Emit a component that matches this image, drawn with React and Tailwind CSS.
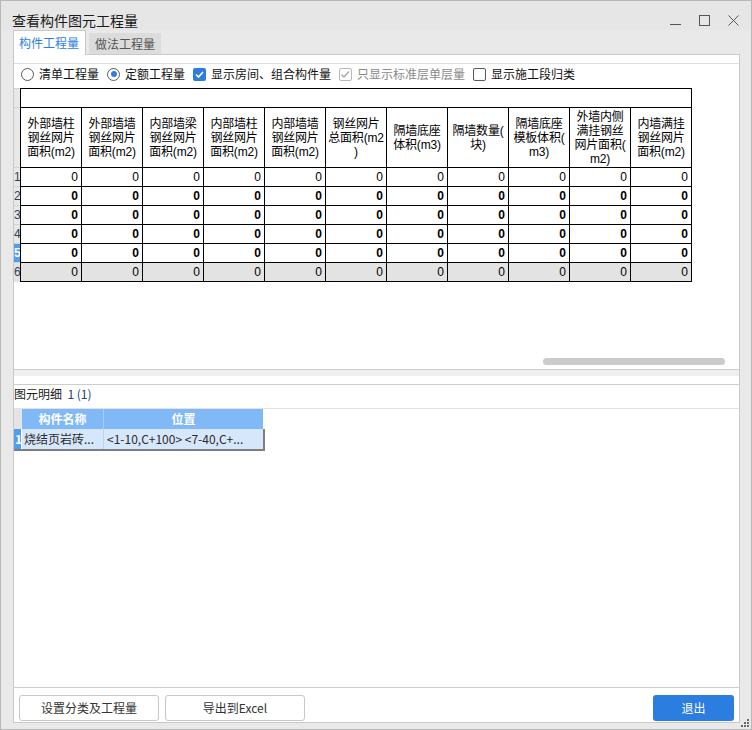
import React from "react";

const HEADERS = [
  ["外部墙柱", "钢丝网片", "面积(m2)"],
  ["外部墙墙", "钢丝网片", "面积(m2)"],
  ["内部墙梁", "钢丝网片", "面积(m2)"],
  ["内部墙柱", "钢丝网片", "面积(m2)"],
  ["内部墙墙", "钢丝网片", "面积(m2)"],
  ["钢丝网片", "总面积(m2", ")"],
  ["隔墙底座", "体积(m3)"],
  ["隔墙数量(", "块)"],
  ["隔墙底座", "模板体积(", "m3)"],
  ["外墙内侧", "满挂钢丝", "网片面积(", "m2)"],
  ["内墙满挂", "钢丝网片", "面积(m2)"],
];

// true = bold row
const ROWS = [false, true, true, true, true, false];

const Radio = ({ checked }) => (
  <span className="w-[13px] h-[13px] shrink-0 rounded-full border border-[#5a5a5a] bg-white flex items-center justify-center">
    {checked && <span className="w-[6px] h-[6px] rounded-full bg-[#2b7de0]" />}
  </span>
);

const Check = ({ checked, disabled }) => {
  if (checked && !disabled) {
    return (
      <span className="w-[13px] h-[13px] shrink-0 rounded-[2px] bg-[#2b7de0] flex items-center justify-center">
        <svg width="11" height="11" viewBox="0 0 11 11">
          <polyline points="2,5.5 4.5,8 9,3" fill="none" stroke="#fff" strokeWidth="1.7" />
        </svg>
      </span>
    );
  }
  return (
    <span
      className={`w-[13px] h-[13px] shrink-0 rounded-[2px] border bg-white flex items-center justify-center ${
        disabled ? "border-[#b8b8b8]" : "border-[#5a5a5a]"
      }`}
    >
      {checked && (
        <svg width="11" height="11" viewBox="0 0 11 11">
          <polyline points="1.5,5.5 4,8 9,2.5" fill="none" stroke="#a8a8a8" strokeWidth="1.4" />
        </svg>
      )}
    </span>
  );
};

const Option = ({ control, label, muted }) => (
  <div className="flex items-center mr-[8px]">
    {control}
    <span className={`ml-[5px] text-[12px] leading-[20px] ${muted ? "text-[#8a8a8a]" : "text-[#111]"}`}>{label}</span>
  </div>
);

const App = () => {
  return (
    <div className="w-[752px] h-[730px] bg-[#e9e9e9] border border-[#b8b8b8] flex flex-col relative overflow-hidden font-['Noto_Sans_CJK_SC','Microsoft_YaHei',sans-serif] text-[#111]">
      {/* title bar */}
      <div className="h-[29px] shrink-0 flex items-start pt-[9px] pl-[11px] pr-[12px] bg-[#e6e6e6]">
        <span className="text-[14px] leading-[20px] text-[#1a1a1a]">查看构件图元工程量</span>
        <div className="ml-auto flex items-center h-[20px] gap-[18px] text-[#555]">
          <svg width="11" height="11" viewBox="0 0 11 11">
            <line x1="0" y1="9.5" x2="11" y2="9.5" stroke="#555" strokeWidth="1" />
          </svg>
          <svg width="11" height="11" viewBox="0 0 11 11">
            <rect x="0.5" y="0.5" width="10" height="10" fill="none" stroke="#555" strokeWidth="1" />
          </svg>
          <svg width="11" height="11" viewBox="0 0 11 11">
            <line x1="0.5" y1="0.5" x2="10.5" y2="10.5" stroke="#555" strokeWidth="1" />
            <line x1="10.5" y1="0.5" x2="0.5" y2="10.5" stroke="#555" strokeWidth="1" />
          </svg>
        </div>
      </div>

      {/* tabs */}
      <div className="h-[24px] shrink-0 flex items-end pl-[12px]">
        <div className="relative z-10 -mb-px h-[25px] w-[73px] bg-white border border-b-0 border-[#c9c9c9] pl-[5px] text-[12px] leading-[23px] text-[#2b7de0]">
          构件工程量
        </div>
        <div className="ml-[3px] h-[21px] w-[72px] bg-[#dcdcdc] pl-[6px] text-[12px] leading-[21px] text-[#555]">
          做法工程量
        </div>
      </div>

      {/* main panel */}
      <div className="ml-[12px] w-[727px] h-[669px] shrink-0 bg-white border border-[#c9c9c9] flex flex-col">
        <div className="h-[8px] shrink-0" />
        {/* options */}
        <div className="h-[21px] shrink-0 border-t border-[#dedede] flex items-center pl-[7px]">
          <Option control={<Radio />} label="清单工程量" />
          <Option control={<Radio checked />} label="定额工程量" />
          <Option control={<Check checked />} label="显示房间、组合构件量" />
          <Option control={<Check checked disabled />} label="只显示标准层单层量" muted />
          <Option control={<Check />} label="显示施工段归类" />
        </div>

        {/* grid */}
        <div className="h-[285px] shrink-0 flex flex-col pt-[4px] font-['Liberation_Sans','Noto_Sans_CJK_SC',sans-serif]">
          <div className="flex h-[19px] shrink-0">
            <div className="w-[6px] bg-[#e8e8e8] border-t border-[#d2d2d2]" />
            <div className="w-[672px] border-t border-l border-r border-black" />
          </div>
          <div className="flex h-[60px] shrink-0">
            <div className="w-[6px] bg-[#e8e8e8] border-t border-[#d2d2d2]" />
            <div className="w-[672px] flex border-t border-r border-black">
              {HEADERS.map((lines, i) => (
                <div
                  key={i}
                  className="w-[61px] shrink-0 border-l border-black flex flex-col items-center justify-center text-[12px] leading-[14px] tracking-[-0.2px] text-black"
                >
                  {lines.map((l, j) => (
                    <span key={j} className="whitespace-nowrap">
                      {l}
                    </span>
                  ))}
                </div>
              ))}
            </div>
          </div>
          {ROWS.map((bold, r) => {
            const last = r === ROWS.length - 1;
            const sel = r === 4;
            return (
              <div key={r} className={`flex shrink-0 ${last ? "h-[20px]" : "h-[19px]"}`}>
                <div
                  className={`w-[6px] border-t border-[#d2d2d2] text-[12px] leading-[18px] overflow-visible whitespace-nowrap ${
                    sel ? "bg-[#4f9ef0] text-white font-bold" : last ? "bg-[#e3e3e3] text-[#33405a]" : "bg-[#e8e8e8] text-[#33405a]"
                  }`}
                >
                  {r + 1}
                </div>
                <div
                  className={`w-[672px] flex border-t border-r border-black ${last ? "border-b bg-[#e3e3e3]" : "bg-white"}`}
                >
                  {HEADERS.map((_, c) => (
                    <div
                      key={c}
                      className={`w-[61px] shrink-0 border-l border-black text-right pr-[3px] text-[12px] leading-[18px] text-black ${
                        bold ? "font-bold" : ""
                      }`}
                    >
                      0
                    </div>
                  ))}
                </div>
              </div>
            );
          })}
          <div className="flex-1" />
          <div className="h-[7px] shrink-0 flex justify-end pr-[14px]">
            <div className="w-[182px] h-[7px] rounded-full bg-[#cbcbcb]" />
          </div>
          <div className="h-[4px] shrink-0" />
        </div>

        {/* splitter */}
        <div className="shrink-0 border-t border-b border-[#cdcdcd]">
          <div className="h-[6px] bg-[#efefef]" />
          <div className="h-[8px] bg-white" />
        </div>

        {/* detail panel */}
        <div className="h-[303px] shrink-0 flex flex-col border-b border-[#cdcdcd]">
          <div className="h-[23px] shrink-0 text-[12px] leading-[17px] text-[#1a1a1a] whitespace-pre">
            图元明细  <span className="text-[#22407a]">1 (1)</span>
          </div>
          <div className="flex-1 border-t border-[#e2e2e2]">
            <div className="flex h-[20px] w-[249px] text-[12px] leading-[20px] font-bold text-white">
              <div className="w-[7px] shrink-0 bg-[#e4e4e4]" />
              <div className="w-[82px] shrink-0 border-l border-[#dbe9fb] bg-[#80b9f5] text-center">构件名称</div>
              <div className="w-[160px] shrink-0 border-l border-[#a7cbf3] bg-[#80b9f5] text-center">位置</div>
            </div>
            <div className="flex h-[22px] w-[251px] border-r-2 border-b-2 border-[#7e7e7e] text-[12px] leading-[20px] text-[#2a2a2a]">
              <div className="w-[7px] shrink-0 bg-[#4f9ef0] text-white font-bold pl-[1px]">1</div>
              <div className="w-[82px] shrink-0 border-l border-white bg-[#d6e7fb] pl-[2px] whitespace-nowrap overflow-hidden">
                烧结页岩砖...
              </div>
              <div className="w-[160px] shrink-0 border-l border-[#bcd3ee] bg-[#d6e7fb] pl-[3px] whitespace-nowrap overflow-hidden">
                &lt;1-10,C+100&gt; &lt;7-40,C+...
              </div>
            </div>
          </div>
        </div>

        {/* buttons */}
        <div className="h-[33px] shrink-0 flex items-start pt-[7px] pl-[5px] pr-[5px]">
          <button className="w-[140px] h-[26px] bg-white border border-[#c8c8c8] rounded-[3px] text-[12px] leading-[24px] text-[#333]">
            设置分类及工程量
          </button>
          <button className="ml-[6px] w-[140px] h-[26px] bg-white border border-[#c8c8c8] rounded-[3px] text-[12px] leading-[24px] text-[#333]">
            导出到Excel
          </button>
          <button className="ml-auto w-[81px] h-[26px] bg-[#2b7de0] rounded-[3px] text-[12px] leading-[26px] text-white">
            退出
          </button>
        </div>
      </div>

      {/* resize grip */}
      <svg className="absolute right-[1px] bottom-[1px]" width="9" height="9" viewBox="0 0 9 9">
        <rect x="6" y="0" width="2" height="2" fill="#6a6a6a" />
        <rect x="3" y="3" width="2" height="2" fill="#6a6a6a" />
        <rect x="6" y="3" width="2" height="2" fill="#6a6a6a" />
        <rect x="0" y="6" width="2" height="2" fill="#6a6a6a" />
        <rect x="3" y="6" width="2" height="2" fill="#6a6a6a" />
        <rect x="6" y="6" width="2" height="2" fill="#6a6a6a" />
      </svg>
    </div>
  );
};

export default App;
